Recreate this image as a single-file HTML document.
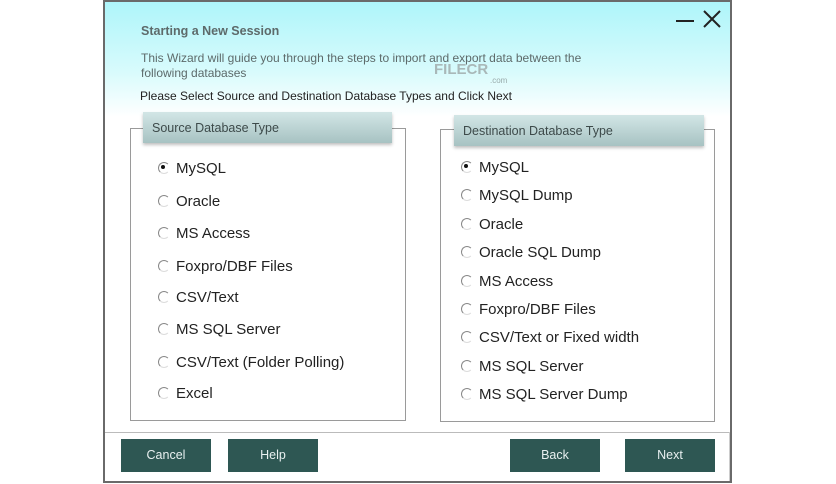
<!DOCTYPE html>
<html><head><style>
*{margin:0;padding:0;box-sizing:border-box}
body{width:836px;height:484px;background:#fff;position:relative;font-family:"Liberation Sans",Arial,sans-serif;overflow:hidden}
.win{position:absolute;left:103px;top:0;width:629px;height:483px;border:2px solid #6a6a6a;background:linear-gradient(#aef5fa 0px,#d8fbfc 70px,#fff 115px,#fff)}
.t{position:absolute;color:#5d6a6a;font-size:12px}
.box{position:absolute;border:1px solid #9a9a9a;background:#fff}
.hdr{position:absolute;height:31px;background:linear-gradient(#d2e6e6,#a7c2c2);box-shadow:0 2px 3px rgba(0,0,0,.25);font-size:12.5px;color:#3d4a4a;padding:9px 0 0 9px}
.r{position:absolute;font-size:15px;color:#222;white-space:nowrap}
.r:before{content:"";position:absolute;left:-18px;top:2px;width:10px;height:10px;border-radius:50%;border:1.5px solid #888;border-right-color:#fff;border-bottom-color:#ddd}
.r.s:after{content:"";position:absolute;left:-15px;top:5px;width:4px;height:4px;border-radius:50%;background:#111}
.btn{position:absolute;top:439px;width:90px;height:33px;background:#2e5753;color:#e8f0f0;font-size:12.5px;text-align:center;line-height:33px}
</style></head><body>
<div class="win"></div>
<div class="t" style="left:141px;top:24px;font-weight:bold;font-size:12.5px">Starting a New Session</div>
<div class="t" style="left:141px;top:51px;line-height:15px">This Wizard will guide you through the steps to import and export data between the<br>following databases</div>
<div class="t" style="left:434px;top:61px;font-weight:bold;font-size:15px;color:#a9b8b8">FILECR</div>
<div class="t" style="left:490px;top:76px;font-size:8px;color:#9aa">.com</div>
<div class="t" style="left:140px;top:89px;color:#222">Please Select Source and Destination Database Types and Click Next</div>
<svg style="position:absolute;left:674px;top:8px" width="48" height="22"><path d="M2 13H20" stroke="#222" stroke-width="2"/><path d="M30 3L46 19M46 3L30 19" stroke="#222" stroke-width="2"/></svg>
<div class="box" style="left:130px;top:128px;width:276px;height:293px"></div>
<div class="hdr" style="left:143px;top:112px;width:249px">Source Database Type</div>
<div class="box" style="left:440px;top:129px;width:275px;height:293px"></div>
<div class="hdr" style="left:454px;top:115px;width:250px">Destination Database Type</div>
<div class="r s" style="left:176px;top:160px">MySQL</div>
<div class="r" style="left:176px;top:193px">Oracle</div>
<div class="r" style="left:176px;top:225px">MS Access</div>
<div class="r" style="left:176px;top:258px">Foxpro/DBF Files</div>
<div class="r" style="left:176px;top:289px">CSV/Text</div>
<div class="r" style="left:176px;top:321px">MS SQL Server</div>
<div class="r" style="left:176px;top:354px">CSV/Text (Folder Polling)</div>
<div class="r" style="left:176px;top:385px">Excel</div>
<div class="r s" style="left:479px;top:159px">MySQL</div>
<div class="r" style="left:479px;top:187px">MySQL Dump</div>
<div class="r" style="left:479px;top:216px">Oracle</div>
<div class="r" style="left:479px;top:244px">Oracle SQL Dump</div>
<div class="r" style="left:479px;top:273px">MS Access</div>
<div class="r" style="left:479px;top:301px">Foxpro/DBF Files</div>
<div class="r" style="left:479px;top:329px">CSV/Text or Fixed width</div>
<div class="r" style="left:479px;top:358px">MS SQL Server</div>
<div class="r" style="left:479px;top:386px">MS SQL Server Dump</div>
<div style="position:absolute;left:105px;top:432px;width:625px;height:1px;background:#bbb"></div>
<div style="position:absolute;left:729px;top:432px;width:1px;height:49px;background:#ccc"></div>
<div class="btn" style="left:121px">Cancel</div>
<div class="btn" style="left:228px">Help</div>
<div class="btn" style="left:510px">Back</div>
<div class="btn" style="left:625px">Next</div>
</body></html>
